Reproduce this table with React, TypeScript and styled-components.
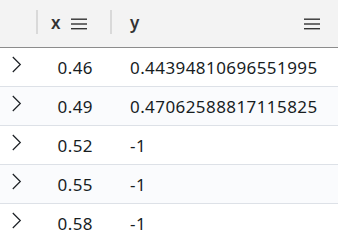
import React from "react";
import styled, { createGlobalStyle } from "styled-components";

const Global = createGlobalStyle`
  html, body { margin: 0; padding: 0; background: #ffffff; }
  body { font-family: "Noto Sans", "Open Sans", sans-serif; }
`;

const Grid = styled.div`
  width: 338px;
  height: 242px;
  overflow: hidden;
  background: #ffffff;
`;

const HeaderRow = styled.div`
  display: grid;
  grid-template-columns: 37px 74px 1fr;
  height: 47px;
  background: #f3f3f3;
  border-bottom: 1px solid #8c8c8c;
`;

const HeaderCell = styled.div<{ $pad: number; $sep?: boolean; $spread?: boolean }>`
  position: relative;
  display: flex;
  align-items: center;
  justify-content: ${(p) => (p.$spread ? "space-between" : "flex-start")};
  gap: 10px;
  padding: 0 18px 0 ${(p) => p.$pad}px;
  font-size: 17px;
  font-weight: 600;
  color: #333333;
  &::before {
    content: "";
    display: ${(p) => (p.$sep ? "block" : "none")};
    position: absolute;
    left: -1px;
    top: 10px;
    width: 2px;
    height: 24px;
    background: #d9d9d9;
  }
`;

const Label = styled.span`
  line-height: 1;
  margin-top: -3px;
`;

const MenuIcon = () => (
  <svg width="16" height="12" viewBox="0 0 16 12" style={{ display: "block", marginTop: 1 }}>
    <rect x="0" y="0.5" width="16" height="1.4" fill="#333" />
    <rect x="0" y="5.3" width="16" height="1.4" fill="#333" />
    <rect x="0" y="10" width="16" height="1.4" fill="#333" />
  </svg>
);

const Row = styled.div<{ $alt: boolean }>`
  display: grid;
  grid-template-columns: 37px 74px 1fr;
  height: 39px;
  box-sizing: border-box;
  border-bottom: 1px solid #dde1e7;
  background: ${(p) => (p.$alt ? "#fafbfd" : "#ffffff")};
`;

const ChevronCell = styled.div`
  display: flex;
  align-items: flex-start;
  padding: 8px 0 0 12px;
`;

const NumCell = styled.div<{ $right?: boolean }>`
  display: flex;
  align-items: center;
  justify-content: ${(p) => (p.$right ? "flex-end" : "flex-start")};
  padding: ${(p) => (p.$right ? "0 18px 0 0" : "0 0 0 19px")};
  font-size: 17px;
  letter-spacing: 0.42px;
  color: #181d1f;
  white-space: nowrap;
`;

const Chevron = () => (
  <svg width="10" height="18" viewBox="0 0 10 18" style={{ display: "block" }}>
    <path d="M0.8 1 L8.3 8.5 L0.8 16" fill="none" stroke="#1b1f24" strokeWidth="1.2" />
  </svg>
);

const rows: [string, string][] = [
  ["0.46", "0.44394810696551995"],
  ["0.49", "0.47062588817115825"],
  ["0.52", "-1"],
  ["0.55", "-1"],
  ["0.58", "-1"],
];

export default function App() {
  return (
    <>
      <Global />
      <Grid>
        <HeaderRow>
          <HeaderCell $pad={0} />
          <HeaderCell $pad={14} $sep>
            <Label>x</Label>
            <MenuIcon />
          </HeaderCell>
          <HeaderCell $pad={19} $sep $spread>
            <Label>y</Label>
            <MenuIcon />
          </HeaderCell>
        </HeaderRow>
        {rows.map(([x, y], i) => (
          <Row key={i} $alt={i % 2 === 1}>
            <ChevronCell>
              <Chevron />
            </ChevronCell>
            <NumCell $right>{x}</NumCell>
            <NumCell>{y}</NumCell>
          </Row>
        ))}
      </Grid>
    </>
  );
}
